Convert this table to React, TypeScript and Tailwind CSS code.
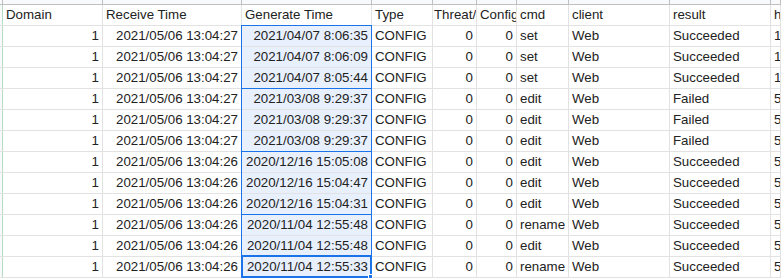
const COLS = [
  { key: "domain", label: "Domain", w: "w-[100px]", align: "right" },
  { key: "recv", label: "Receive Time", w: "w-[139px]", align: "right" },
  { key: "gen", label: "Generate Time", w: "w-[130px]", align: "right" },
  { key: "type", label: "Type", w: "w-[61px]", align: "left" },
  { key: "threat", label: "Threat/", w: "w-[44px]", align: "right" },
  { key: "config", label: "Config", w: "w-[40px]", align: "right" },
  { key: "cmd", label: "cmd", w: "w-[52px]", align: "left" },
  { key: "client", label: "client", w: "w-[101px]", align: "left" },
  { key: "result", label: "result", w: "w-[101px]", align: "left" },
  { key: "h", label: "h", w: "flex-1", align: "left" },
];

type Row = Record<string, string>;

const raw: [string, string, string, string, string][] = [
  ["2021/05/06 13:04:27", "2021/04/07 8:06:35", "set", "Succeeded", "1"],
  ["2021/05/06 13:04:27", "2021/04/07 8:06:09", "set", "Succeeded", "1"],
  ["2021/05/06 13:04:27", "2021/04/07 8:05:44", "set", "Succeeded", "1"],
  ["2021/05/06 13:04:27", "2021/03/08 9:29:37", "edit", "Failed", "5"],
  ["2021/05/06 13:04:27", "2021/03/08 9:29:37", "edit", "Failed", "5"],
  ["2021/05/06 13:04:27", "2021/03/08 9:29:37", "edit", "Failed", "5"],
  ["2021/05/06 13:04:26", "2020/12/16 15:05:08", "edit", "Succeeded", "5"],
  ["2021/05/06 13:04:26", "2020/12/16 15:04:47", "edit", "Succeeded", "5"],
  ["2021/05/06 13:04:26", "2020/12/16 15:04:31", "edit", "Succeeded", "5"],
  ["2021/05/06 13:04:26", "2020/11/04 12:55:48", "rename", "Succeeded", "5"],
  ["2021/05/06 13:04:26", "2020/11/04 12:55:48", "edit", "Succeeded", "5"],
  ["2021/05/06 13:04:26", "2020/11/04 12:55:33", "rename", "Succeeded", "5"],
];

const rows: Row[] = raw.map(([recv, gen, cmd, result, h]) => ({
  domain: "1",
  recv,
  gen,
  type: "CONFIG",
  threat: "0",
  config: "0",
  cmd,
  client: "Web",
  result,
  h,
}));

export default function App() {
  return (
    <div className="relative w-[781px] h-[278px] overflow-hidden bg-white font-['Liberation_Sans',Arial,sans-serif] text-[13.3px] text-[#222]">
      {/* column header strip, mostly scrolled off */}
      <div className="flex h-[5px] bg-[#f8f9fa] border-b border-[#c0c0c0]">
        <div className="w-[3px] border-r border-[#c0c0c0]" />
        {COLS.map((c) => (
          <div key={c.key} className={`${c.w} shrink-0 border-r border-[#c0c0c0]`} />
        ))}
      </div>

      <div className="flex h-[21px] border-b border-[#e2e2e2]">
        <div className="w-[3px] shrink-0 bg-[#f8f9fa] border-r border-[#b7dcc3]" />
        {COLS.map((c) => (
          <div
            key={c.key}
            className={`${c.w} shrink-0 overflow-hidden whitespace-nowrap border-r border-[#e2e2e2] ${
              c.key === "threat" ? "pl-[1px]" : "px-[3px]"
            } leading-[20px]`}
          >
            {c.label}
          </div>
        ))}
      </div>

      {rows.map((r, i) => (
        <div key={i} className="flex h-[21px] border-b border-[#e2e2e2]">
          <div className="w-[3px] shrink-0 bg-[#f8f9fa] border-r border-[#b7dcc3]" />
          {COLS.map((c) => (
            <div
              key={c.key}
              className={`${c.w} shrink-0 overflow-hidden whitespace-nowrap border-r border-[#e2e2e2] px-[3px] leading-[20px] ${
                c.align === "right" ? "text-right" : "text-left"
              } ${c.key === "gen" ? "bg-[#e8f0fe]" : ""}`}
            >
              {r[c.key]}
            </div>
          ))}
        </div>
      ))}

      {/* selected ranges in Generate Time */}
      {[0, 1, 2, 3].map((g) => (
        <div
          key={g}
          className="absolute left-[241px] w-[131px] h-[64px] border border-[#1a73e8] pointer-events-none"
          style={{ top: 25 + g * 63 }}
        />
      ))}
      {/* active cell */}
      <div className="absolute left-[241px] top-[255px] w-[131px] h-[23px] border-2 border-[#1a73e8] pointer-events-none" />
      <div className="absolute left-[368px] top-[274px] w-[5px] h-[5px] bg-[#1a73e8] border border-white pointer-events-none" />
    </div>
  );
}
